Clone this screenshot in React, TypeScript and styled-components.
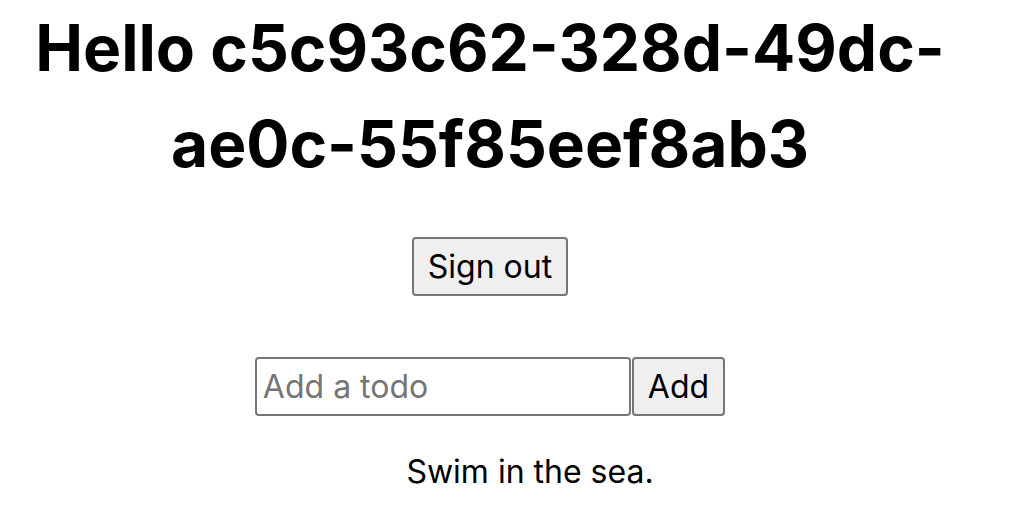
import { createGlobalStyle } from "styled-components"
import styled from "styled-components"

const GlobalStyle = createGlobalStyle`
  html, body {
    margin: 0;
    padding: 0;
    background: #fff;
  }
  body {
    font-family: Inter, "Noto Sans", sans-serif;
    color: #000;
  }
`

const App: React.FC = () => {
  const todos = ["Swim in the sea."]

  return (
    <>
      <GlobalStyle />
      <Main>
        <Title>Hello c5c93c62-328d-49dc-ae0c-55f85eef8ab3</Title>
        <Button>Sign out</Button>
        <Form onSubmit={(e) => e.preventDefault()}>
          <TodoInput placeholder="Add a todo" />
          <Button type="submit">Add</Button>
        </Form>
        <TodoList>
          {todos.map((todo) => (
            <TodoItem key={todo}>{todo}</TodoItem>
          ))}
        </TodoList>
      </Main>
    </>
  )
}

export default App

const Main = styled.main`
  width: 980px;
  display: flex;
  flex-direction: column;
  align-items: center;
  text-align: center;
  font-size: 32px;
`
const Title = styled.h1`
  margin: 0 0 45px;
  font-size: 64px;
  font-weight: 700;
  line-height: 96px;
  width: 960px;
`
const Button = styled.button`
  height: 59px;
  padding: 0 14px;
  font-family: inherit;
  font-size: 32px;
  color: #000;
  background: #efefef;
  border: 2px solid #767676;
  border-radius: 4px;
`
const Form = styled.form`
  display: flex;
  align-items: center;
  gap: 1px;
  margin-top: 61px;
`
const TodoInput = styled.input`
  width: 376px;
  height: 59px;
  box-sizing: border-box;
  padding: 0 6px;
  font-family: inherit;
  font-size: 32px;
  border: 2px solid #767676;
  border-radius: 4px;
  &::placeholder {
    color: #757575;
  }
`
const TodoList = styled.ul`
  list-style: none;
  margin: 36px 0 0;
  padding: 0 0 0 80px;
`
const TodoItem = styled.li`
  line-height: normal;
`
